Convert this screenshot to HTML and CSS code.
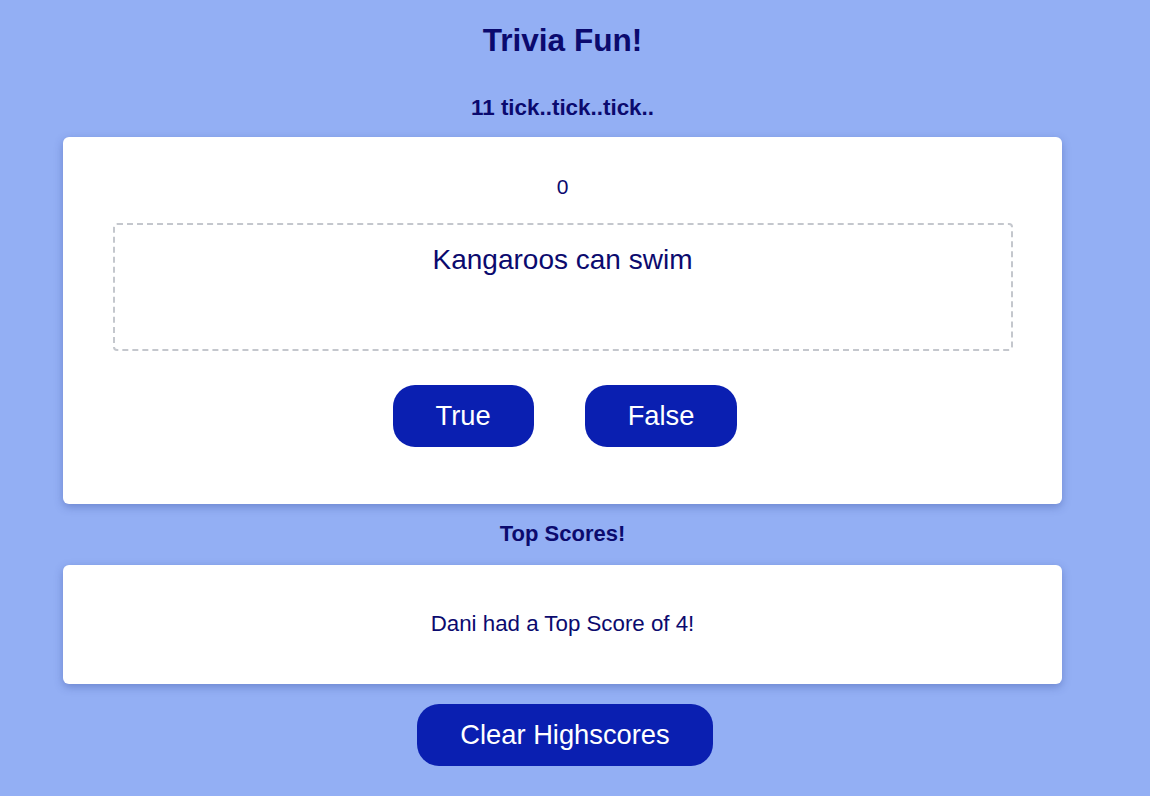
FILE: index.html
```html
<!DOCTYPE html>
<html>
<head>
<meta charset="utf-8">
<link rel="stylesheet" href="styles.css">
</head>
<body>
<div class="wrap">
  <h1 class="title">Trivia Fun!</h1>
  <div class="ticker">11 tick..tick..tick..</div>
  <div class="card quiz">
    <div class="score">0</div>
    <div class="question">Kangaroos can swim</div>
    <div class="answers">
      <button class="btn">True</button>
      <button class="btn">False</button>
    </div>
  </div>
  <h3 class="subtitle">Top Scores!</h3>
  <div class="card scores">
    <div class="entry">Dani had a Top Score of 4!</div>
  </div>
  <div class="clear-row">
    <button class="btn">Clear Highscores</button>
  </div>
</div>
</body>
</html>
```
FILE: styles.css
```css
html, body {
  margin: 0;
  padding: 0;
  background: #93aff4;
  font-family: "Liberation Sans", Arial, sans-serif;
  color: #0b0a6e;
}
.wrap {
  width: 999px;
  margin-left: 63px;
  text-align: center;
  padding-bottom: 30px;
}
.title {
  margin: 22px 0 0;
  font-size: 31.6px;
  line-height: 36px;
  font-weight: bold;
}
.ticker {
  margin-top: 37px;
  font-size: 22.4px;
  line-height: 26px;
  font-weight: bold;
}
.card {
  background: #fff;
  border-radius: 6px;
  box-shadow: 0 3px 8px rgba(40, 60, 140, 0.35);
}
.quiz {
  margin-top: 16px;
  height: 367px;
  box-sizing: border-box;
  padding-top: 38px;
  display: flex;
  flex-direction: column;
  align-items: center;
}
.score {
  font-size: 21px;
  line-height: 24px;
}
.question {
  margin-top: 24px;
  width: 900px;
  height: 128px;
  box-sizing: border-box;
  border: 2px dashed #c4c7cd;
  border-radius: 4px;
  padding-top: 19px;
  font-size: 28px;
  line-height: 32px;
}
.answers {
  margin-top: 34px;
  display: flex;
  gap: 51px;
  justify-content: center;
  margin-left: 5px;
}
.btn {
  height: 62px;
  padding: 0 43px;
  border: none;
  border-radius: 22px;
  background: #0a1fb1;
  color: #fff;
  font-family: "Liberation Sans", Arial, sans-serif;
  font-size: 27.3px;
  cursor: pointer;
}
.subtitle {
  margin: 17px 0 0;
  font-size: 22px;
  line-height: 26px;
  font-weight: bold;
}
.scores {
  margin-top: 18px;
  height: 119px;
  box-sizing: border-box;
  padding-top: 46px;
}
.entry {
  font-size: 22.3px;
  line-height: 26px;
}
.clear-row {
  margin-top: 20px;
  display: flex;
  justify-content: center;
  margin-left: 5px;
}
```
